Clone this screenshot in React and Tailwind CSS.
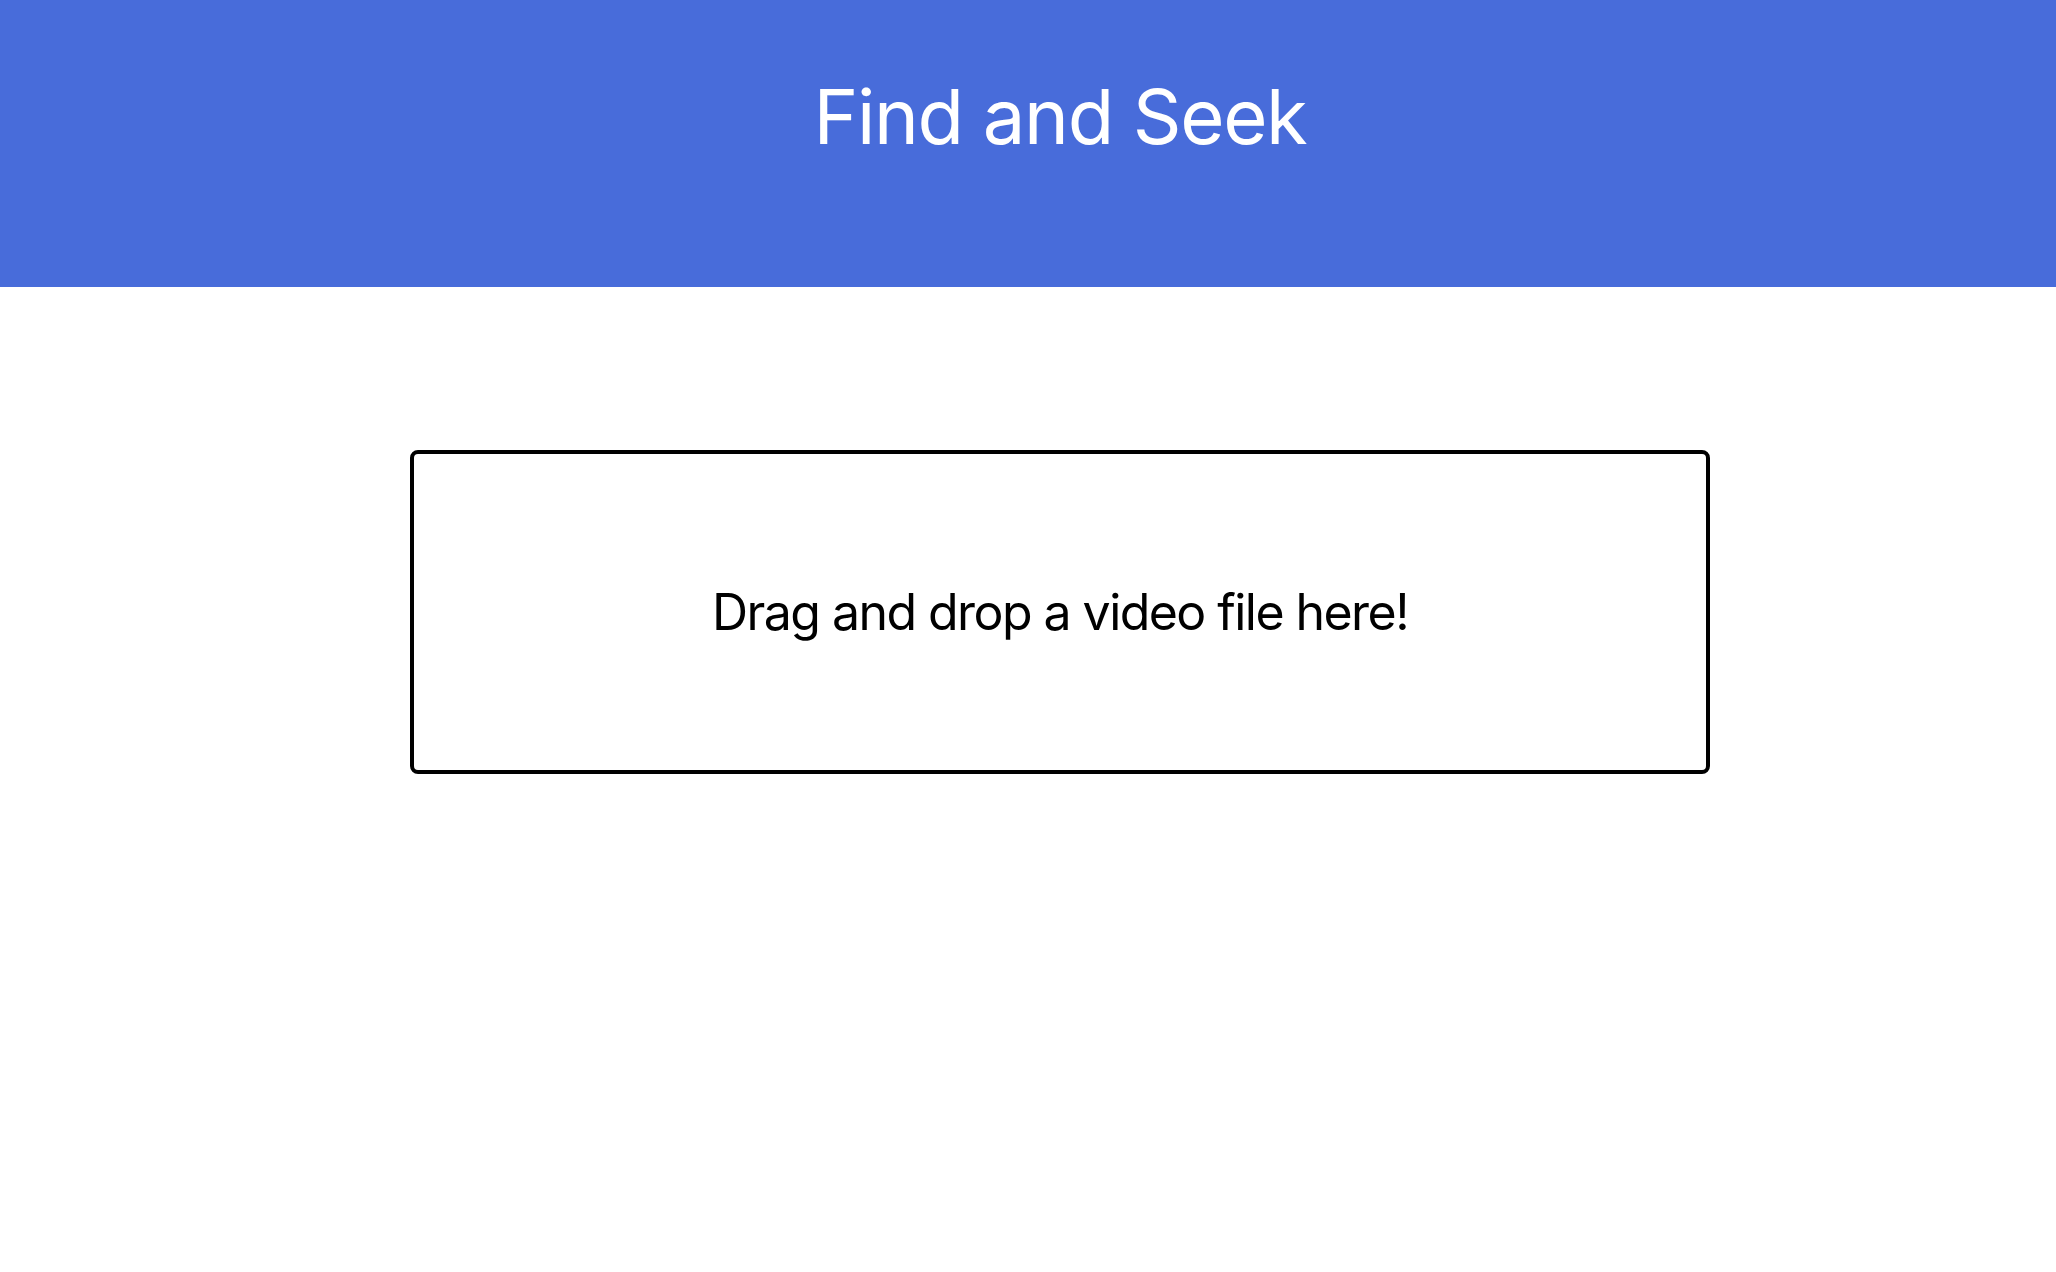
export default function App() {
  return (
    <div className="min-h-screen bg-white" style={{ fontFamily: 'Inter, "Noto Sans", sans-serif' }}>
      <header className="h-[287px] bg-[#486cda] flex justify-center pt-[70px] pl-[64px]">
        <h1 className="text-white text-[76px] leading-[92px] font-normal tracking-[-0.018em]">Find and Seek</h1>
      </header>
      <main className="flex justify-center pt-[163px] pl-[64px]">
        <div className="w-[1300px] h-[324px] border-4 border-black rounded-[8px] flex items-center justify-center">
          <p className="text-black text-[50px] leading-none tracking-[-0.031em]">Drag and drop a video file here!</p>
        </div>
      </main>
    </div>
  );
}
